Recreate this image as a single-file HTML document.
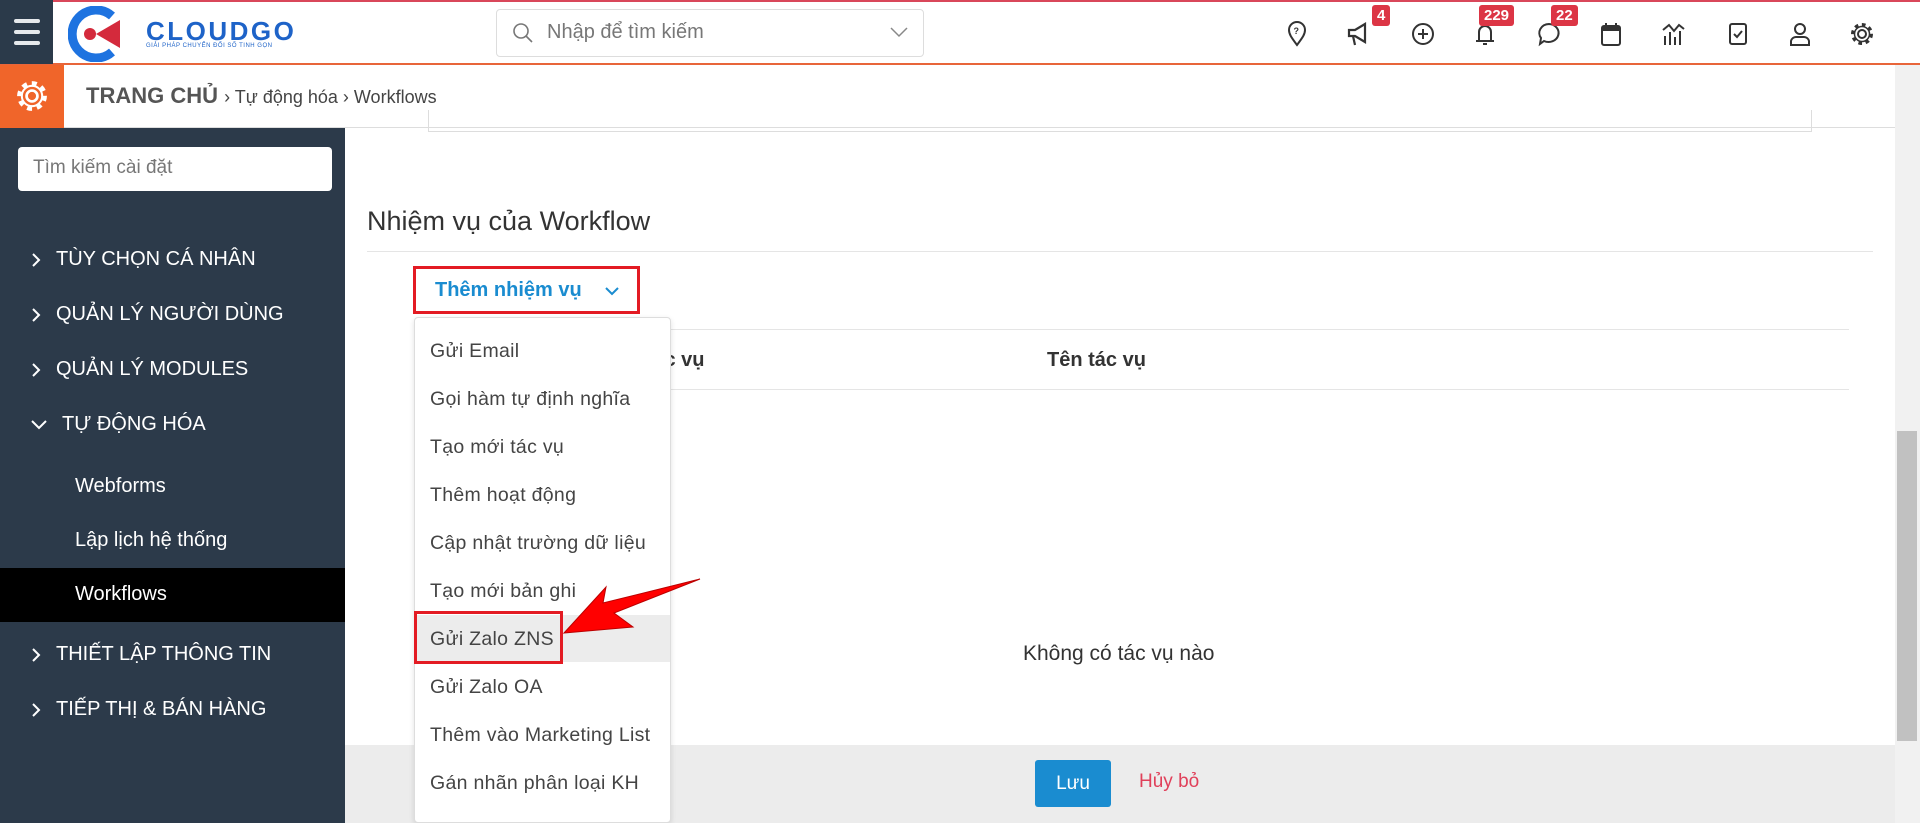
<!DOCTYPE html>
<html><head><meta charset="utf-8"><style>
*{margin:0;padding:0;box-sizing:border-box}
body{width:1920px;height:823px;overflow:hidden;font-family:"Liberation Sans","DejaVu Sans",sans-serif;background:#fff;position:relative}
.abs{position:absolute}
.hdr{left:0;top:0;width:1920px;height:65px;background:#fff;border-top:2px solid #d9475a;border-bottom:2px solid #e8653a}
.ham{left:0;top:0;width:53px;height:64px;background:#2b3a4a}
.ham i{position:absolute;left:14px;width:26px;height:4px;border-radius:2px;background:#e6e9ec}
.search{left:496px;top:9px;width:428px;height:48px;border:1px solid #ddd;border-radius:4px}
.ico{top:20px;width:28px;height:28px}
.badge{background:#dc3545;color:#fff;font-size:15px;font-weight:bold;border-radius:3px;padding:2px 5px;top:5px}
.bc{left:0;top:65px;width:1895px;height:63px;border-bottom:1px solid #ddd;background:#fff}
.side{left:0;top:128px;width:345px;height:695px;background:#2c3a4a}
.side .it{position:absolute;left:56px;color:#fff;font-size:20px}
.side .it svg{position:absolute;left:-26px;top:4px}
.side .sub{position:absolute;left:75px;color:#fff;font-size:20px}
.dd{left:414px;top:317px;width:257px;height:506px;background:#fff;border:1px solid #ddd;border-radius:4px;box-shadow:0 2px 6px rgba(0,0,0,.12)}
.dd div{position:absolute;left:15px;font-size:19.5px;color:#444;letter-spacing:.3px}
</style></head><body>
<div class="abs hdr"></div>
<div class="abs ham"><i style="top:19px"></i><i style="top:30px"></i><i style="top:41px"></i></div>
<svg class="abs" style="left:68px;top:6px" width="60" height="56" viewBox="0 0 60 56"><path d="M44 10 A24 24 0 1 0 44 46" fill="none" stroke="#1e73e0" stroke-width="9"/><path d="M28 28 L52 14 L52 42 Z" fill="#d42a3c"/><circle cx="22" cy="28" r="6" fill="#d42a3c"/></svg>
<div class="abs" style="left:146px;top:16px;font-size:26px;font-weight:bold;color:#1e63c8;letter-spacing:2.5px">CLOUDGO</div>
<div class="abs" style="left:146px;top:43px;font-size:6px;color:#1e63c8;letter-spacing:.5px">GIẢI PHÁP CHUYỂN ĐỔI SỐ TINH GỌN</div>
<div class="abs search"></div>
<svg class="abs" style="left:512px;top:22px" width="22" height="22"><circle cx="9" cy="9" r="7" fill="none" stroke="#777" stroke-width="1.6"/><path d="M14 14 L20 20" stroke="#777" stroke-width="1.6"/></svg>
<div class="abs" style="left:547px;top:21px;font-size:20px;color:#777">Nhập để tìm kiếm</div>
<svg class="abs" style="left:890px;top:26px" width="18" height="12"><path d="M1 2 L9 10 L17 2" fill="none" stroke="#888" stroke-width="1.5"/></svg>
<svg class="abs ico" style="left:1283px" viewBox="0 0 28 28"><path d="M14 25 C8 17 6 14 6 10 A8 8 0 0 1 22 10 C22 14 20 17 14 25Z" fill="none" stroke="#333" stroke-width="2"/><text x="10.5" y="14" font-size="9" font-weight="bold" fill="#333">?</text></svg>
<svg class="abs ico" style="left:1345px" viewBox="0 0 28 28"><path d="M4 10 H10 L20 4 V22 L10 16 H4 Z M8 16 L10 25" fill="none" stroke="#333" stroke-width="2.2"/></svg>
<div class="abs badge" style="left:1372px">4</div>
<svg class="abs ico" style="left:1409px" viewBox="0 0 28 28"><circle cx="14" cy="14" r="10" fill="none" stroke="#333" stroke-width="2"/><path d="M14 9 V19 M9 14 H19" stroke="#333" stroke-width="2"/></svg>
<svg class="abs ico" style="left:1471px" viewBox="0 0 28 28"><path d="M8 21 V12 A6 6 0 0 1 20 12 V21 Z M5 21 H23 M12 24 H16" fill="none" stroke="#333" stroke-width="2"/></svg>
<div class="abs badge" style="left:1479px">229</div>
<svg class="abs ico" style="left:1535px" viewBox="0 0 28 28"><path d="M14 4 A10 9 0 1 1 9 21 L5 24 L6 18 A10 9 0 0 1 14 4Z" fill="none" stroke="#333" stroke-width="2"/></svg>
<div class="abs badge" style="left:1551px">22</div>
<svg class="abs ico" style="left:1597px" viewBox="0 0 28 28"><rect x="5" y="6" width="18" height="19" rx="2" fill="none" stroke="#333" stroke-width="2"/><rect x="5" y="6" width="18" height="5" fill="#333"/><path d="M9 3 V7 M19 3 V7" stroke="#333" stroke-width="2"/></svg>
<svg class="abs ico" style="left:1660px" viewBox="0 0 28 28"><path d="M3 10 L9 5 L14 11 L19 5 L24 9 M5 25 V16 M10 25 V12 M15 25 V17 M20 25 V11" fill="none" stroke="#333" stroke-width="2"/></svg>
<svg class="abs ico" style="left:1724px" viewBox="0 0 28 28"><rect x="6" y="4" width="16" height="20" rx="2" fill="none" stroke="#333" stroke-width="2"/><path d="M10 14 L13 17 L18 11" fill="none" stroke="#333" stroke-width="2"/></svg>
<svg class="abs ico" style="left:1786px" viewBox="0 0 28 28"><circle cx="14" cy="9" r="5" fill="none" stroke="#333" stroke-width="2"/><path d="M5 25 V21 A5 5 0 0 1 10 17 H18 A5 5 0 0 1 23 21 V25 Z" fill="none" stroke="#333" stroke-width="2"/></svg>
<svg class="abs ico" style="left:1848px" viewBox="0 0 28 28"><circle cx="14" cy="14" r="4" fill="none" stroke="#333" stroke-width="2"/><circle cx="14" cy="14" r="9" fill="none" stroke="#333" stroke-width="4" stroke-dasharray="3.5 3.5"/><circle cx="14" cy="14" r="7.5" fill="none" stroke="#333" stroke-width="1.5"/></svg>
<div class="abs bc"></div>
<div class="abs" style="left:0;top:65px;width:64px;height:63px;background:#f0652a"></div>
<svg class="abs" style="left:13px;top:77px" width="38" height="38" viewBox="0 0 28 28"><circle cx="14" cy="14" r="4" fill="none" stroke="#fff" stroke-width="2"/><circle cx="14" cy="14" r="9" fill="none" stroke="#fff" stroke-width="4" stroke-dasharray="3.5 3.5"/><circle cx="14" cy="14" r="7.5" fill="none" stroke="#fff" stroke-width="1.5"/></svg>
<div class="abs" style="left:86px;top:83px;font-size:22px;color:#555;font-weight:bold">TRANG CHỦ <span style="font-size:18px;color:#444;font-weight:normal">› Tự động hóa › Workflows</span></div>
<div class="abs side"></div>
<div class="abs" style="left:18px;top:147px;width:314px;height:44px;background:#fff;border-radius:4px;font-size:19px;color:#777;padding:10px 15px">Tìm kiếm cài đặt</div>
<div class="abs" style="left:0;top:568px;width:345px;height:54px;background:#000"></div>
<div class="side abs" style="background:none">
<div class="it" style="top:120px"><svg width="12" height="16"><path d="M3 2 L9 8 L3 14" fill="none" stroke="#fff" stroke-width="2"/></svg>TÙY CHỌN CÁ NHÂN</div>
<div class="it" style="top:175px"><svg width="12" height="16"><path d="M3 2 L9 8 L3 14" fill="none" stroke="#fff" stroke-width="2"/></svg>QUẢN LÝ NGƯỜI DÙNG</div>
<div class="it" style="top:230px"><svg width="12" height="16"><path d="M3 2 L9 8 L3 14" fill="none" stroke="#fff" stroke-width="2"/></svg>QUẢN LÝ MODULES</div>
<div class="it" style="top:285px;left:62px"><svg width="18" height="16" style="left:-32px"><path d="M2 4 L9 11 L16 4" fill="none" stroke="#fff" stroke-width="2"/></svg>TỰ ĐỘNG HÓA</div>
<div class="sub" style="top:347px">Webforms</div>
<div class="sub" style="top:401px">Lập lịch hệ thống</div>
<div class="sub" style="top:455px">Workflows</div>
<div class="it" style="top:515px"><svg width="12" height="16"><path d="M3 2 L9 8 L3 14" fill="none" stroke="#fff" stroke-width="2"/></svg>THIẾT LẬP THÔNG TIN</div>
<div class="it" style="top:570px"><svg width="12" height="16"><path d="M3 2 L9 8 L3 14" fill="none" stroke="#fff" stroke-width="2"/></svg>TIẾP THỊ &amp; BÁN HÀNG</div>
</div>
<div class="abs" style="left:1895px;top:65px;width:25px;height:758px;background:#f1f1f1"></div>
<div class="abs" style="left:1897px;top:431px;width:20px;height:310px;background:#c1c1c1"></div>
<div class="abs" style="left:428px;top:110px;width:1384px;height:22px;border:1px solid #ddd;border-top:none"></div>
<div class="abs" style="left:367px;top:206px;font-size:27px;color:#333">Nhiệm vụ của Workflow</div>
<div class="abs" style="left:367px;top:251px;width:1506px;height:1px;background:#e5e5e5"></div>
<div class="abs" style="left:671px;top:329px;width:1178px;height:1px;background:#e5e5e5"></div>
<div class="abs" style="left:671px;top:389px;width:1178px;height:1px;background:#e5e5e5"></div>
<div class="abs" style="left:600px;top:349px;font-size:20px;font-weight:bold;color:#333">Loại tác vụ</div>
<div class="abs" style="left:1047px;top:349px;font-size:20px;font-weight:bold;color:#333">Tên tác vụ</div>
<div class="abs" style="left:1023px;top:642px;font-size:21px;color:#333">Không có tác vụ nào</div>
<div class="abs" style="left:345px;top:745px;width:1550px;height:78px;background:#ececec"></div>
<div class="abs" style="left:1035px;top:760px;width:76px;height:47px;background:#1a8cd0;border-radius:3px;color:#fff;font-size:19px;text-align:center;line-height:47px">Lưu</div>
<div class="abs" style="left:1139px;top:771px;font-size:19px;color:#e0405a">Hủy bỏ</div>
<div class="abs" style="left:413px;top:266px;width:227px;height:48px;border:3px solid #e31b23"></div>
<div class="abs" style="left:435px;top:279px;font-size:20px;font-weight:bold;color:#1a8cd0">Thêm nhiệm vụ</div>
<svg class="abs" style="left:604px;top:286px" width="16" height="10"><path d="M2 2 L8 8 L14 2" fill="none" stroke="#1a8cd0" stroke-width="2"/></svg>
<div class="abs dd">
<div style="top:22px">Gửi Email</div>
<div style="top:70px">Gọi hàm tự định nghĩa</div>
<div style="top:118px">Tạo mới tác vụ</div>
<div style="top:166px">Thêm hoạt động</div>
<div style="top:214px">Cập nhật trường dữ liệu</div>
<div style="top:262px">Tạo mới bản ghi</div>
<div style="left:0;top:297px;width:255px;height:47px;background:#ececec"></div>
<div style="top:310px">Gửi Zalo ZNS</div>
<div style="top:358px">Gửi Zalo OA</div>
<div style="top:406px">Thêm vào Marketing List</div>
<div style="top:454px">Gán nhãn phân loại KH</div>
</div>
<div class="abs" style="left:414px;top:611px;width:149px;height:53px;border:3px solid #e31b23"></div>
<svg class="abs" style="left:550px;top:565px" width="170" height="90"><path d="M14 68 L56 22 L53 38 L150 14 L64 48 L83 62 Z" fill="#f00" stroke="#b00" stroke-width="1"/></svg>
</body></html>
